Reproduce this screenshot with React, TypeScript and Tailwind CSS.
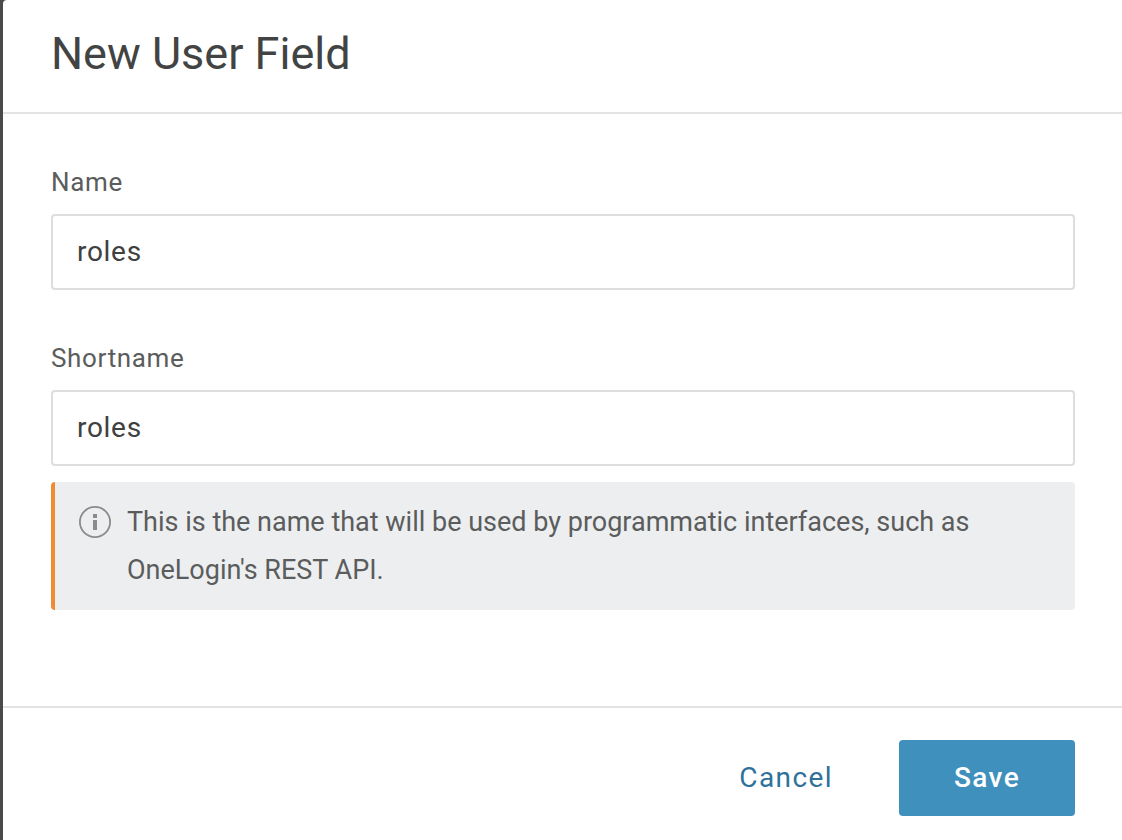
import { useState } from "react";

type FieldProps = {
  id: string;
  label: string;
  value: string;
  onChange: (value: string) => void;
};

function Field({ id, label, value, onChange }: FieldProps) {
  return (
    <div className="flex flex-col gap-3">
      <label htmlFor={id} className="text-[26px] leading-10 tracking-wide text-[#5b5c5c]">
        {label}
      </label>
      <input
        id={id}
        type="text"
        value={value}
        onChange={(e) => onChange(e.target.value)}
        className="h-[76px] w-full rounded-sm border-2 border-[#dcdddd] bg-white px-6 pb-[2px] text-[28px] tracking-wide text-[#404040]"
      />
    </div>
  );
}

export default function App() {
  const [name, setName] = useState("roles");
  const [shortname, setShortname] = useState("roles");
  return (
    <div className="min-h-screen bg-[#4a4a4b] pl-[3px] font-['Roboto',sans-serif]">
      <form
        role="dialog"
        aria-labelledby="dialog-title"
        onSubmit={(e) => e.preventDefault()}
        className="flex min-h-screen flex-col rounded-tl-sm bg-white"
      >
        <header className="border-b-2 border-[#e3e3e3] px-12 pt-6 pb-7">
          <h1 id="dialog-title" className="text-[45px] leading-[60px] text-[#424343]">
            New User Field
          </h1>
        </header>
        <main className="flex flex-1 flex-col pt-12 pr-[47px] pb-24 pl-12">
          <Field id="name" label="Name" value={name} onChange={setName} />
          <div className="mt-12">
            <Field id="shortname" label="Shortname" value={shortname} onChange={setShortname} />
          </div>
          <div className="mt-4 flex gap-4 rounded-sm border-l-4 border-[#f08a33] bg-[#edeef0] px-6 py-4">
            <svg viewBox="0 0 32 32" className="mt-2 size-8 shrink-0" fill="none" aria-hidden="true">
              <circle cx="16" cy="16" r="15.1" stroke="#8a8b8b" strokeWidth="1.8" />
              <path d="M14 8h4v4h-4zM14 14h4v10h-4z" fill="#8a8b8b" />
            </svg>
            <p className="text-[27px] leading-[48px] text-[#5b5c5c]">
              This is the name that will be used by programmatic interfaces, such as OneLogin's REST API.
            </p>
          </div>
        </main>
        <footer className="flex justify-end gap-8 border-t-2 border-[#e3e3e3] pt-8 pr-[47px] pb-6 pl-12">
          <button type="button" className="h-[76px] px-[34px] text-[28px] tracking-wider text-[#2f719b]">
            Cancel
          </button>
          <button
            type="submit"
            className="h-[76px] w-44 rounded-sm bg-[#4090be] text-[28px] font-medium tracking-wider text-white"
          >
            Save
          </button>
        </footer>
      </form>
    </div>
  );
}
